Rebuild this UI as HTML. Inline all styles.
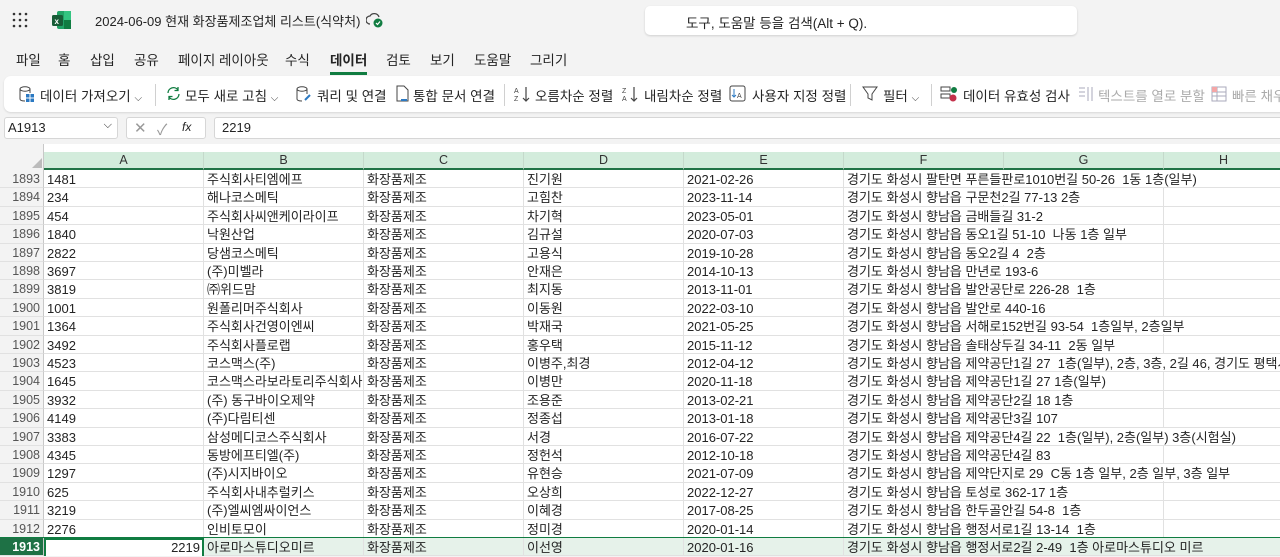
<!DOCTYPE html>
<html><head><meta charset="utf-8">
<style>
*{box-sizing:border-box;margin:0;padding:0}
body{width:1280px;height:556px;overflow:hidden;background:#f3f3f3;font-family:"Liberation Sans","Noto Sans CJK KR",sans-serif;color:#242424;position:relative}
.abs{position:absolute}
.title{left:95px;top:11px;font-size:13px}
.search{left:645px;top:6px;width:432px;height:29px;background:#fff;border-radius:5px;box-shadow:0 1px 2px rgba(0,0,0,.15);font-size:13.5px;padding:6px 0 0 41px}
.tabs{top:49px;left:0;font-size:13.5px}
.tabs span{position:absolute;top:0;white-space:nowrap}
.ribbon{left:4px;top:76px;width:1290px;height:36px;background:#fff;border-radius:7px;box-shadow:0 1px 2px rgba(0,0,0,.12)}
.rb{position:absolute;top:9px;font-size:13.5px;white-space:nowrap}
.ic{position:absolute;top:9px}
.sep{position:absolute;top:8px;width:1px;height:22px;background:#d0d0d0}
.namebox{left:4px;top:117px;width:114px;height:22px;background:#fff;border:1px solid #d6d6d6;border-radius:3px;font-size:13px;padding:2px 0 0 3px}
.fxbox{left:126px;top:117px;width:80px;height:22px;background:#fff;border:1px solid #d6d6d6;border-radius:3px}
.fbar{left:214px;top:117px;width:1070px;height:22px;background:#fff;border:1px solid #d6d6d6;border-radius:3px;font-size:13px;padding:2px 0 0 7px}
.grid{left:0;top:144px;width:1280px;height:412px;background:#fff}
.ch{position:absolute;top:8px;height:18px;background:#d3ecdc;border-bottom:2px solid #217346;border-right:1px solid #c5d9cb;font-size:12.5px;text-align:center;line-height:16px;color:#333}
.row{position:absolute;left:0;height:18.4px;width:1280px;font-size:13px;line-height:19px}
.c{position:absolute;top:0;height:18.4px;border-right:1px solid #e1e1e1;border-bottom:1px solid #e1e1e1;padding-left:3px;white-space:nowrap;overflow:hidden}
.rh{left:0;width:44px;background:#f3f3f3;text-align:right;padding-right:3px;color:#555;font-size:12.5px;border-right:1px solid #c8c8c8}
.addr{position:absolute;left:845px;top:0;padding-left:2px;padding-right:2px;background:#fff;height:17px;white-space:nowrap}
.sel .c{background:#e6f2ea}
.sel .addr{background:#e6f2ea}
.chev{font-size:10px;color:#444}
</style></head><body>
<svg class="abs" style="left:12px;top:12px" width="16" height="16"><g fill="#333"><circle cx="2" cy="2" r="1.3"/><circle cx="8" cy="2" r="1.3"/><circle cx="14" cy="2" r="1.3"/><circle cx="2" cy="8" r="1.3"/><circle cx="8" cy="8" r="1.3"/><circle cx="14" cy="8" r="1.3"/><circle cx="2" cy="14" r="1.3"/><circle cx="8" cy="14" r="1.3"/><circle cx="14" cy="14" r="1.3"/></g></svg>
<svg class="abs" style="left:52px;top:11px" width="20" height="18"><rect x="5" y="0" width="14" height="18" rx="2" fill="#21a366"/><rect x="12" y="0" width="7" height="9" fill="#33c481"/><rect x="12" y="9" width="7" height="9" fill="#107c41"/><rect x="0" y="4" width="11" height="11" rx="1.5" fill="#185c37"/><text x="2.5" y="13" font-size="8" fill="#fff" font-family="Liberation Sans" font-weight="bold">x</text></svg>
<div class="abs title">2024-06-09 현재 화장품제조업체 리스트(식약처)</div>
<svg class="abs" style="left:366px;top:12px" width="18" height="16"><path d="M4 12a4 4 0 0 1 0-8a5 5 0 0 1 9 1" fill="none" stroke="#444" stroke-width="1.3"/><circle cx="12" cy="11" r="4.5" fill="#107c41"/><path d="M10 11l1.5 1.5l2.5-3" stroke="#fff" stroke-width="1.2" fill="none"/></svg>
<div class="abs search">도구, 도움말 등을 검색(Alt + Q).</div>
<div class="abs tabs"><span style="left:16px">파일</span><span style="left:58px">홈</span><span style="left:90px">삽입</span><span style="left:134px">공유</span><span style="left:178px">페이지 레이아웃</span><span style="left:285px">수식</span><span style="left:330px;font-weight:bold;border-bottom:3px solid #107c41;padding-bottom:3px">데이터</span><span style="left:386px">검토</span><span style="left:430px">보기</span><span style="left:474px">도움말</span><span style="left:530px">그리기</span></div>
<div class="abs ribbon">
<svg class="ic" style="left:14px" width="18" height="18"><ellipse cx="7" cy="4" rx="5" ry="2.2" fill="none" stroke="#444"/><path d="M2 4v10c0 1.2 2 2 5 2M12 4v4" fill="none" stroke="#444"/><rect x="8" y="9" width="8" height="8" fill="#2b79c2"/><path d="M8 13h8M12 9v8" stroke="#fff"/></svg>
<span class="rb" style="left:36px">데이터 가져오기 <span class="chev">⌵</span></span>
<div class="sep" style="left:151px"></div>
<svg class="ic" style="left:161px" width="17" height="17"><path d="M3 8a5.5 5.5 0 0 1 10-3M14 9a5.5 5.5 0 0 1-10 3" fill="none" stroke="#107c41" stroke-width="1.3"/><path d="M13 2v3.5h-3.5M4 15v-3.5h3.5" fill="none" stroke="#107c41" stroke-width="1.3"/></svg>
<span class="rb" style="left:181px">모두 새로 고침 <span class="chev">⌵</span></span>
<svg class="ic" style="left:291px" width="18" height="18"><ellipse cx="7" cy="4" rx="5" ry="2.2" fill="none" stroke="#444"/><path d="M2 4v10c0 1.2 2 2 5 2M12 4v5" fill="none" stroke="#444"/><path d="M10 15l5-5" stroke="#2b79c2" stroke-width="2"/></svg>
<span class="rb" style="left:313px">쿼리 및 연결</span>
<svg class="ic" style="left:391px" width="16" height="18"><path d="M2 1h7l4 4v11H2z" fill="none" stroke="#444"/><path d="M6 15h6" stroke="#2b79c2" stroke-width="2"/></svg>
<span class="rb" style="left:409px">통합 문서 연결</span>
<div class="sep" style="left:500px"></div>
<svg class="ic" style="left:509px" width="18" height="18"><path d="M13 2v14M10 13l3 3l3-3" fill="none" stroke="#444" stroke-width="1.2"/><text x="1" y="8" font-size="7" fill="#444">A</text><text x="1" y="16" font-size="7" fill="#444">Z</text></svg>
<span class="rb" style="left:531px">오름차순 정렬</span>
<svg class="ic" style="left:617px" width="18" height="18"><path d="M13 2v14M10 13l3 3l3-3" fill="none" stroke="#444" stroke-width="1.2"/><text x="1" y="8" font-size="7" fill="#444">Z</text><text x="1" y="16" font-size="7" fill="#444">A</text></svg>
<span class="rb" style="left:640px">내림차순 정렬</span>
<svg class="ic" style="left:725px" width="17" height="17"><rect x="1" y="1" width="15" height="15" rx="2" fill="none" stroke="#444"/><path d="M5 4v8M3 10l2 2l2-2" fill="none" stroke="#2b79c2"/><text x="8" y="13" font-size="7" fill="#444">A</text></svg>
<span class="rb" style="left:748px">사용자 지정 정렬</span>
<div class="sep" style="left:846px"></div>
<svg class="ic" style="left:858px" width="16" height="17"><path d="M1 2h14l-5 7v6l-4-2v-4z" fill="none" stroke="#444"/></svg>
<span class="rb" style="left:879px">필터 <span class="chev">⌵</span></span>
<div class="sep" style="left:927px"></div>
<svg class="ic" style="left:936px" width="18" height="18"><rect x="1" y="2" width="9" height="4" fill="none" stroke="#444"/><rect x="1" y="9" width="9" height="4" fill="none" stroke="#444"/><circle cx="14" cy="5" r="3" fill="#107c41"/><circle cx="13" cy="13" r="3.5" fill="#c4314b"/></svg>
<span class="rb" style="left:959px">데이터 유효성 검사</span>
<svg class="ic" style="left:1073px" width="18" height="18"><path d="M2 3h6M2 7h6M2 11h6M11 2v14M15 2v14" stroke="#aab" fill="none"/></svg>
<span class="rb" style="left:1094px;color:#aaa">텍스트를 열로 분할</span>
<svg class="ic" style="left:1206px" width="18" height="18"><rect x="2" y="2" width="14" height="14" fill="none" stroke="#aab"/><path d="M2 7h14M2 11h14M7 2v14" stroke="#aab"/><rect x="2" y="2" width="5" height="5" fill="#f4a6a6"/></svg>
<span class="rb" style="left:1228px;color:#aaa">빠른 채우</span>
</div>
<div class="abs namebox">A1913<span style="position:absolute;right:5px;top:1px;font-size:11px">⌵</span></div>
<div class="abs fxbox"><span style="position:absolute;left:7px;top:1px;color:#999;font-size:15px">✕</span><span style="position:absolute;left:30px;top:1px;color:#999;font-size:15px">✓</span><span style="position:absolute;left:55px;top:2px;font-size:12px;font-style:italic">fx</span></div>
<div class="abs fbar">2219</div>
<div class="abs grid">
<div style="position:absolute;left:0;top:0;width:44px;height:26px;background:#f3f3f3;border-right:1px solid #c8c8c8"></div>
<svg style="position:absolute;left:32px;top:14px" width="10" height="10"><path d="M10 0V10H0Z" fill="#bbb"/></svg>
<div class="ch" style="left:44px;width:160px">A</div>
<div class="ch" style="left:204px;width:160px">B</div>
<div class="ch" style="left:364px;width:160px">C</div>
<div class="ch" style="left:524px;width:160px">D</div>
<div class="ch" style="left:684px;width:160px">E</div>
<div class="ch" style="left:844px;width:160px">F</div>
<div class="ch" style="left:1004px;width:160px">G</div>
<div class="ch" style="left:1164px;width:120px">H</div>
</div>
<div class="row" style="top:170px"><div class="c rh">1893</div><div class="c" style="left:44px;width:160px">1481</div><div class="c" style="left:204px;width:160px">주식회사티엠에프</div><div class="c" style="left:364px;width:160px">화장품제조</div><div class="c" style="left:524px;width:160px">진기원</div><div class="c" style="left:684px;width:160px">2021-02-26</div><div class="c" style="left:844px;width:160px"></div><div class="c" style="left:1004px;width:160px"></div><div class="c" style="left:1164px;width:120px"></div><span class="addr">경기도 화성시 팔탄면 푸른들판로1010번길 50-26&nbsp; 1동 1층(일부)</span></div>
<div class="row" style="top:188.4px"><div class="c rh">1894</div><div class="c" style="left:44px;width:160px">234</div><div class="c" style="left:204px;width:160px">해나코스메틱</div><div class="c" style="left:364px;width:160px">화장품제조</div><div class="c" style="left:524px;width:160px">고힘찬</div><div class="c" style="left:684px;width:160px">2023-11-14</div><div class="c" style="left:844px;width:160px"></div><div class="c" style="left:1004px;width:160px"></div><div class="c" style="left:1164px;width:120px"></div><span class="addr">경기도 화성시 향남읍 구문천2길 77-13 2층</span></div>
<div class="row" style="top:206.8px"><div class="c rh">1895</div><div class="c" style="left:44px;width:160px">454</div><div class="c" style="left:204px;width:160px">주식회사씨앤케이라이프</div><div class="c" style="left:364px;width:160px">화장품제조</div><div class="c" style="left:524px;width:160px">차기혁</div><div class="c" style="left:684px;width:160px">2023-05-01</div><div class="c" style="left:844px;width:160px"></div><div class="c" style="left:1004px;width:160px"></div><div class="c" style="left:1164px;width:120px"></div><span class="addr">경기도 화성시 향남읍 금배들길 31-2</span></div>
<div class="row" style="top:225.2px"><div class="c rh">1896</div><div class="c" style="left:44px;width:160px">1840</div><div class="c" style="left:204px;width:160px">낙원산업</div><div class="c" style="left:364px;width:160px">화장품제조</div><div class="c" style="left:524px;width:160px">김규설</div><div class="c" style="left:684px;width:160px">2020-07-03</div><div class="c" style="left:844px;width:160px"></div><div class="c" style="left:1004px;width:160px"></div><div class="c" style="left:1164px;width:120px"></div><span class="addr">경기도 화성시 향남읍 동오1길 51-10&nbsp; 나동 1층 일부</span></div>
<div class="row" style="top:243.6px"><div class="c rh">1897</div><div class="c" style="left:44px;width:160px">2822</div><div class="c" style="left:204px;width:160px">당샘코스메틱</div><div class="c" style="left:364px;width:160px">화장품제조</div><div class="c" style="left:524px;width:160px">고용식</div><div class="c" style="left:684px;width:160px">2019-10-28</div><div class="c" style="left:844px;width:160px"></div><div class="c" style="left:1004px;width:160px"></div><div class="c" style="left:1164px;width:120px"></div><span class="addr">경기도 화성시 향남읍 동오2길 4&nbsp; 2층</span></div>
<div class="row" style="top:262px"><div class="c rh">1898</div><div class="c" style="left:44px;width:160px">3697</div><div class="c" style="left:204px;width:160px">(주)미벨라</div><div class="c" style="left:364px;width:160px">화장품제조</div><div class="c" style="left:524px;width:160px">안재은</div><div class="c" style="left:684px;width:160px">2014-10-13</div><div class="c" style="left:844px;width:160px"></div><div class="c" style="left:1004px;width:160px"></div><div class="c" style="left:1164px;width:120px"></div><span class="addr">경기도 화성시 향남읍 만년로 193-6</span></div>
<div class="row" style="top:280.4px"><div class="c rh">1899</div><div class="c" style="left:44px;width:160px">3819</div><div class="c" style="left:204px;width:160px">㈜위드맘</div><div class="c" style="left:364px;width:160px">화장품제조</div><div class="c" style="left:524px;width:160px">최지동</div><div class="c" style="left:684px;width:160px">2013-11-01</div><div class="c" style="left:844px;width:160px"></div><div class="c" style="left:1004px;width:160px"></div><div class="c" style="left:1164px;width:120px"></div><span class="addr">경기도 화성시 향남읍 발안공단로 226-28&nbsp; 1층</span></div>
<div class="row" style="top:298.8px"><div class="c rh">1900</div><div class="c" style="left:44px;width:160px">1001</div><div class="c" style="left:204px;width:160px">원폴리머주식회사</div><div class="c" style="left:364px;width:160px">화장품제조</div><div class="c" style="left:524px;width:160px">이동원</div><div class="c" style="left:684px;width:160px">2022-03-10</div><div class="c" style="left:844px;width:160px"></div><div class="c" style="left:1004px;width:160px"></div><div class="c" style="left:1164px;width:120px"></div><span class="addr">경기도 화성시 향남읍 발안로 440-16</span></div>
<div class="row" style="top:317.2px"><div class="c rh">1901</div><div class="c" style="left:44px;width:160px">1364</div><div class="c" style="left:204px;width:160px">주식회사건영이엔씨</div><div class="c" style="left:364px;width:160px">화장품제조</div><div class="c" style="left:524px;width:160px">박재국</div><div class="c" style="left:684px;width:160px">2021-05-25</div><div class="c" style="left:844px;width:160px"></div><div class="c" style="left:1004px;width:160px"></div><div class="c" style="left:1164px;width:120px"></div><span class="addr">경기도 화성시 향남읍 서해로152번길 93-54&nbsp; 1층일부, 2층일부</span></div>
<div class="row" style="top:335.6px"><div class="c rh">1902</div><div class="c" style="left:44px;width:160px">3492</div><div class="c" style="left:204px;width:160px">주식회사플로랩</div><div class="c" style="left:364px;width:160px">화장품제조</div><div class="c" style="left:524px;width:160px">홍우택</div><div class="c" style="left:684px;width:160px">2015-11-12</div><div class="c" style="left:844px;width:160px"></div><div class="c" style="left:1004px;width:160px"></div><div class="c" style="left:1164px;width:120px"></div><span class="addr">경기도 화성시 향남읍 솔태상두길 34-11&nbsp; 2동 일부</span></div>
<div class="row" style="top:354px"><div class="c rh">1903</div><div class="c" style="left:44px;width:160px">4523</div><div class="c" style="left:204px;width:160px">코스맥스(주)</div><div class="c" style="left:364px;width:160px">화장품제조</div><div class="c" style="left:524px;width:160px">이병주,최경</div><div class="c" style="left:684px;width:160px">2012-04-12</div><div class="c" style="left:844px;width:160px"></div><div class="c" style="left:1004px;width:160px"></div><div class="c" style="left:1164px;width:120px"></div><span class="addr">경기도 화성시 향남읍 제약공단1길 27&nbsp; 1층(일부), 2층, 3층, 2길 46, 경기도 평택시</span></div>
<div class="row" style="top:372.4px"><div class="c rh">1904</div><div class="c" style="left:44px;width:160px">1645</div><div class="c" style="left:204px;width:160px">코스맥스라보라토리주식회사</div><div class="c" style="left:364px;width:160px">화장품제조</div><div class="c" style="left:524px;width:160px">이병만</div><div class="c" style="left:684px;width:160px">2020-11-18</div><div class="c" style="left:844px;width:160px"></div><div class="c" style="left:1004px;width:160px"></div><div class="c" style="left:1164px;width:120px"></div><span class="addr">경기도 화성시 향남읍 제약공단1길 27 1층(일부)</span></div>
<div class="row" style="top:390.8px"><div class="c rh">1905</div><div class="c" style="left:44px;width:160px">3932</div><div class="c" style="left:204px;width:160px">(주) 동구바이오제약</div><div class="c" style="left:364px;width:160px">화장품제조</div><div class="c" style="left:524px;width:160px">조용준</div><div class="c" style="left:684px;width:160px">2013-02-21</div><div class="c" style="left:844px;width:160px"></div><div class="c" style="left:1004px;width:160px"></div><div class="c" style="left:1164px;width:120px"></div><span class="addr">경기도 화성시 향남읍 제약공단2길 18 1층</span></div>
<div class="row" style="top:409.2px"><div class="c rh">1906</div><div class="c" style="left:44px;width:160px">4149</div><div class="c" style="left:204px;width:160px">(주)다림티센</div><div class="c" style="left:364px;width:160px">화장품제조</div><div class="c" style="left:524px;width:160px">정종섭</div><div class="c" style="left:684px;width:160px">2013-01-18</div><div class="c" style="left:844px;width:160px"></div><div class="c" style="left:1004px;width:160px"></div><div class="c" style="left:1164px;width:120px"></div><span class="addr">경기도 화성시 향남읍 제약공단3길 107</span></div>
<div class="row" style="top:427.6px"><div class="c rh">1907</div><div class="c" style="left:44px;width:160px">3383</div><div class="c" style="left:204px;width:160px">삼성메디코스주식회사</div><div class="c" style="left:364px;width:160px">화장품제조</div><div class="c" style="left:524px;width:160px">서경</div><div class="c" style="left:684px;width:160px">2016-07-22</div><div class="c" style="left:844px;width:160px"></div><div class="c" style="left:1004px;width:160px"></div><div class="c" style="left:1164px;width:120px"></div><span class="addr">경기도 화성시 향남읍 제약공단4길 22&nbsp; 1층(일부), 2층(일부) 3층(시험실)</span></div>
<div class="row" style="top:446px"><div class="c rh">1908</div><div class="c" style="left:44px;width:160px">4345</div><div class="c" style="left:204px;width:160px">동방에프티엘(주)</div><div class="c" style="left:364px;width:160px">화장품제조</div><div class="c" style="left:524px;width:160px">정헌석</div><div class="c" style="left:684px;width:160px">2012-10-18</div><div class="c" style="left:844px;width:160px"></div><div class="c" style="left:1004px;width:160px"></div><div class="c" style="left:1164px;width:120px"></div><span class="addr">경기도 화성시 향남읍 제약공단4길 83</span></div>
<div class="row" style="top:464.4px"><div class="c rh">1909</div><div class="c" style="left:44px;width:160px">1297</div><div class="c" style="left:204px;width:160px">(주)시지바이오</div><div class="c" style="left:364px;width:160px">화장품제조</div><div class="c" style="left:524px;width:160px">유현승</div><div class="c" style="left:684px;width:160px">2021-07-09</div><div class="c" style="left:844px;width:160px"></div><div class="c" style="left:1004px;width:160px"></div><div class="c" style="left:1164px;width:120px"></div><span class="addr">경기도 화성시 향남읍 제약단지로 29&nbsp; C동 1층 일부, 2층 일부, 3층 일부</span></div>
<div class="row" style="top:482.8px"><div class="c rh">1910</div><div class="c" style="left:44px;width:160px">625</div><div class="c" style="left:204px;width:160px">주식회사내추럴키스</div><div class="c" style="left:364px;width:160px">화장품제조</div><div class="c" style="left:524px;width:160px">오상희</div><div class="c" style="left:684px;width:160px">2022-12-27</div><div class="c" style="left:844px;width:160px"></div><div class="c" style="left:1004px;width:160px"></div><div class="c" style="left:1164px;width:120px"></div><span class="addr">경기도 화성시 향남읍 토성로 362-17 1층</span></div>
<div class="row" style="top:501.2px"><div class="c rh">1911</div><div class="c" style="left:44px;width:160px">3219</div><div class="c" style="left:204px;width:160px">(주)엘씨엠싸이언스</div><div class="c" style="left:364px;width:160px">화장품제조</div><div class="c" style="left:524px;width:160px">이혜경</div><div class="c" style="left:684px;width:160px">2017-08-25</div><div class="c" style="left:844px;width:160px"></div><div class="c" style="left:1004px;width:160px"></div><div class="c" style="left:1164px;width:120px"></div><span class="addr">경기도 화성시 향남읍 한두골안길 54-8&nbsp; 1층</span></div>
<div class="row" style="top:519.6px"><div class="c rh">1912</div><div class="c" style="left:44px;width:160px">2276</div><div class="c" style="left:204px;width:160px">인비토모이</div><div class="c" style="left:364px;width:160px">화장품제조</div><div class="c" style="left:524px;width:160px">정미경</div><div class="c" style="left:684px;width:160px">2020-01-14</div><div class="c" style="left:844px;width:160px"></div><div class="c" style="left:1004px;width:160px"></div><div class="c" style="left:1164px;width:120px"></div><span class="addr">경기도 화성시 향남읍 행정서로1길 13-14&nbsp; 1층</span></div>
<div class="row sel" style="top:538px"><div class="c rh" style="background:#1e7145;color:#fff;font-weight:bold">1913</div><div class="c" style="left:44px;width:160px;background:#fff;text-align:right;padding-right:2px;border:1px solid #107c41;border-width:2px 2px 0 2px;line-height:16px">2219</div><div class="c" style="left:204px;width:160px">아로마스튜디오미르</div><div class="c" style="left:364px;width:160px">화장품제조</div><div class="c" style="left:524px;width:160px">이선영</div><div class="c" style="left:684px;width:160px">2020-01-16</div><div class="c" style="left:844px;width:160px"></div><div class="c" style="left:1004px;width:160px"></div><div class="c" style="left:1164px;width:120px"></div><span class="addr">경기도 화성시 향남읍 행정서로2길 2-49&nbsp; 1층 아로마스튜디오 미르</span></div>
<div class="abs" style="left:0;top:537px;width:1280px;height:1px;background:#107c41"></div>
</body></html>
